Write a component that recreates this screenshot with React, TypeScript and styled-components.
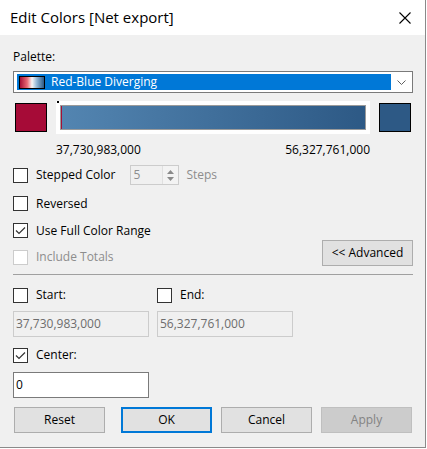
import React, { FC } from "react"
import styled, { createGlobalStyle } from "styled-components"

const GlobalStyle = createGlobalStyle`
    html, body {
        margin: 0;
        padding: 0;
        background: #ffffff;
    }
    body {
        font-family: "Open Sans", "Noto Sans", "Liberation Sans", sans-serif;
        font-size: 12px;
        color: #000;
    }
`

const Window = styled.div`
    width: 425px;
    height: 447px;
    border-right: 1px solid #8a8a8a;
    border-bottom: 1px solid #8a8a8a;
    background: #f0f0f0;
    display: flex;
    flex-direction: column;
`

const TitleBar = styled.div`
    height: 35px;
    background: #ffffff;
    display: flex;
    align-items: center;
    justify-content: space-between;
    padding: 0 14px 0 10px;
    font-size: 15px;
    & span {
        margin-top: -1px;
    }
`

const Body = styled.div`
    flex: 1;
    padding: 14px 12px 0 13px;
    display: flex;
    flex-direction: column;
`

const Label = styled.div`
    height: 16px;
    line-height: 16px;
`

const Select = styled.div`
    margin-top: 6px;
    height: 22px;
    box-sizing: border-box;
    border: 1px solid #7a7a7a;
    background: #fff;
    display: flex;
    align-items: center;
    padding: 2px 0 2px 3px;
`

const Selected = styled.div`
    flex: 1;
    height: 16px;
    background: #0078d7;
    color: #fff;
    display: flex;
    align-items: center;
    padding-left: 2px;
    gap: 6px;
    & span {
        margin-top: -1px;
    }
`

const PaletteChip = styled.div`
    width: 24px;
    height: 11px;
    border: 1px solid #000;
    background: linear-gradient(to right, #a50f35 0%, #e86a75 30%, #f7f5f5 50%, #92b6d6 70%, #2c5985 100%);
`

const Arrow = styled.div`
    width: 21px;
    display: flex;
    justify-content: center;
`

const ColorRow = styled.div`
    margin-top: 8px;
    height: 33px;
    display: flex;
    align-items: center;
`

const Swatch = styled.div<{ $color: string; $left: number }>`
    width: 30px;
    height: 27px;
    margin-left: ${p => p.$left}px;
    border: 1px solid #000;
    background: ${p => p.$color};
`

const RampBox = styled.div`
    margin-left: 9px;
    width: 306px;
    height: 25px;
    padding: 4px;
    background: #fff;
    position: relative;
    &::before {
        content: "";
        position: absolute;
        left: 1px;
        top: 0;
        width: 2px;
        height: 2px;
        background: #000;
    }
`

const Ramp = styled.div`
    height: 100%;
    box-sizing: border-box;
    border: 1px solid #9a9a9a;
    background: linear-gradient(to right, #5385b1, #2d5985);
    box-shadow: inset 1px 0 0 #a50f35;
`

const RangeLabels = styled.div`
    margin: 8px 0 0 43px;
    width: 314px;
    height: 16px;
    line-height: 16px;
    display: flex;
    justify-content: space-between;
`

const OptionsArea = styled.div`
    margin-top: 7px;
    display: flex;
    justify-content: space-between;
`

const OptionsColumn = styled.div`
    display: flex;
    flex-direction: column;
`

const CheckRow = styled.div<{ $h: number }>`
    height: ${p => p.$h}px;
    display: flex;
    align-items: center;
`

const Box = styled.div<{ $disabled?: boolean }>`
    width: 13px;
    height: 13px;
    border: 1px solid ${p => (p.$disabled ? "#cccccc" : "#333333")};
    background: #fff;
    display: flex;
    align-items: center;
    justify-content: center;
    flex-shrink: 0;
`

const CheckText = styled.span<{ $disabled?: boolean }>`
    margin-left: 8px;
    color: ${p => (p.$disabled ? "#8d8d8d" : "#000")};
    margin-top: -1px;
`

const Spin = styled.div`
    margin-left: 15px;
    width: 49px;
    height: 20px;
    box-sizing: border-box;
    border: 1px solid #cccccc;
    display: flex;
    color: #8d8d8d;
    & span {
        flex: 1;
        padding-left: 2px;
        line-height: 17px;
    }
`

const SpinArrows = styled.div`
    width: 15px;
    display: flex;
    flex-direction: column;
    justify-content: center;
    align-items: center;
    gap: 3px;
    border-left: 1px solid #e0e0e0;
    background: #f3f3f3;
`

const Steps = styled.span`
    margin-left: 7px;
    color: #8d8d8d;
    margin-top: -1px;
`

const Button = styled.button<{ $primary?: boolean; $disabled?: boolean }>`
    width: 91px;
    height: 26px;
    box-sizing: border-box;
    font: inherit;
    color: ${p => (p.$disabled ? "#838383" : "#000")};
    background: ${p => (p.$disabled ? "#cccccc" : "#e1e1e1")};
    border: ${p => (p.$primary ? "2px solid #0078d7" : p.$disabled ? "1px solid #bfbfbf" : "1px solid #adadad")};
    padding: 0;
    margin: 0;
    & span {
        position: relative;
        top: -1px;
    }
`

const AdvancedButton = styled(Button)`
    align-self: flex-end;
    margin-bottom: 4px;
`

const Separator = styled.div`
    margin-top: 4px;
    height: 1px;
    background: #a0a0a0;
`

const LimitRow = styled.div<{ $top: number }>`
    margin-top: ${p => p.$top}px;
    display: flex;
    gap: 8px;
`

const LimitCell = styled.div`
    width: 136px;
`

const Field = styled.div<{ $disabled?: boolean }>`
    width: 136px;
    height: 26px;
    box-sizing: border-box;
    border: 1px solid ${p => (p.$disabled ? "#cccccc" : "#7a7a7a")};
    background: ${p => (p.$disabled ? "#f0f0f0" : "#fff")};
    color: ${p => (p.$disabled ? "#6d6d6d" : "#000")};
    padding-left: 2px;
    line-height: 23px;
`

const ButtonBar = styled.div`
    margin-top: 9px;
    margin-left: 1px;
    display: flex;
    & > :nth-child(2) {
        margin-left: 16px;
    }
    & > :nth-child(n + 3) {
        margin-left: 9px;
    }
`

const Check: FC<{ checked?: boolean; disabled?: boolean; label: string; h?: number }> = ({ checked, disabled, label, h = 20 }) => (
    <CheckRow $h={h}>
        <Box $disabled={disabled}>
            {checked && (
                <svg width="11" height="9" viewBox="0 0 11 9">
                    <polyline points="1,4.5 4,7.5 10,1.5" fill="none" stroke="#333" strokeWidth="1.2" />
                </svg>
            )}
        </Box>
        <CheckText $disabled={disabled}>{label}</CheckText>
    </CheckRow>
)

export default function App() {
    return (
        <>
            <GlobalStyle />
            <Window>
                <TitleBar>
                    <span>Edit Colors [Net export]</span>
                    <svg width="12" height="12" viewBox="0 0 12 12">
                        <path d="M0.5 0.5 L11.5 11.5 M11.5 0.5 L0.5 11.5" stroke="#000" strokeWidth="1.1" />
                    </svg>
                </TitleBar>
                <Body>
                    <Label>Palette:</Label>
                    <Select>
                        <Selected>
                            <PaletteChip />
                            <span>Red-Blue Diverging</span>
                        </Selected>
                        <Arrow>
                            <svg width="9" height="5" viewBox="0 0 9 5">
                                <polyline points="0.5,0.5 4.5,4.5 8.5,0.5" fill="none" stroke="#606060" strokeWidth="1" />
                            </svg>
                        </Arrow>
                    </Select>
                    <ColorRow>
                        <Swatch $color="#a60b37" $left={2} />
                        <RampBox>
                            <Ramp />
                        </RampBox>
                        <Swatch $color="#2d5985" $left={9} />
                    </ColorRow>
                    <RangeLabels>
                        <span>37,730,983,000</span>
                        <span>56,327,761,000</span>
                    </RangeLabels>
                    <OptionsArea>
                        <OptionsColumn>
                            <CheckRow $h={20}>
                                <Box />
                                <CheckText>Stepped Color</CheckText>
                                <Spin>
                                    <span>5</span>
                                    <SpinArrows>
                                        <svg width="7" height="4" viewBox="0 0 7 4">
                                            <polygon points="0,4 3.5,0 7,4" fill="#8a8a8a" />
                                        </svg>
                                        <svg width="7" height="4" viewBox="0 0 7 4">
                                            <polygon points="0,0 3.5,4 7,0" fill="#8a8a8a" />
                                        </svg>
                                    </SpinArrows>
                                </Spin>
                                <Steps>Steps</Steps>
                            </CheckRow>
                            <CheckRow $h={5} />
                            <Check label="Reversed" h={27} />
                            <Check label="Use Full Color Range" checked h={27} />
                            <Check label="Include Totals" disabled h={26} />
                        </OptionsColumn>
                        <AdvancedButton>
                            <span>&lt;&lt; Advanced</span>
                        </AdvancedButton>
                    </OptionsArea>
                    <Separator />
                    <LimitRow $top={10}>
                        <LimitCell>
                            <Check label="Start:" />
                        </LimitCell>
                        <LimitCell>
                            <Check label="End:" />
                        </LimitCell>
                    </LimitRow>
                    <LimitRow $top={6}>
                        <Field $disabled>37,730,983,000</Field>
                        <Field $disabled>56,327,761,000</Field>
                    </LimitRow>
                    <LimitRow $top={8}>
                        <Check label="Center:" checked />
                    </LimitRow>
                    <LimitRow $top={7}>
                        <Field>0</Field>
                    </LimitRow>
                    <ButtonBar>
                        <Button><span>Reset</span></Button>
                        <Button $primary><span>OK</span></Button>
                        <Button><span>Cancel</span></Button>
                        <Button $disabled><span>Apply</span></Button>
                    </ButtonBar>
                </Body>
            </Window>
        </>
    )
}
